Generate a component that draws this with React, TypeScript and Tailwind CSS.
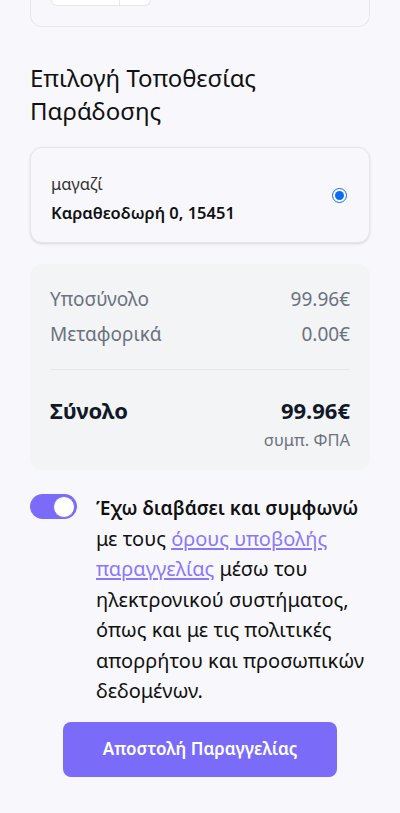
import React from "react";

export default function App() {
  return (
    <div
      className="flex min-h-[813px] w-[400px] flex-col bg-[#f8f8fc] text-[#111111]"
      style={{ fontFamily: '"Noto Sans", "Open Sans", sans-serif' }}
    >
      <div className="px-[30px]">
        {/* top card remnant */}
        <div className="relative h-[27px] rounded-b-xl border border-t-0 border-[#e5e7eb] bg-[#f8f8fc]">
          <div className="absolute left-[20px] top-0 flex h-[6px] w-[100px] rounded-b-md border border-t-0 border-[#e5e7eb] bg-white">
            <div className="w-[68px] border-r border-[#e5e7eb]" />
            <div className="flex-1" />
          </div>
        </div>

        <h2 className="mt-[34px] text-[24px] font-normal leading-[33px] text-[#111]">
          Επιλογή Τοποθεσίας
          <br />
          Παράδοσης
        </h2>

        <div className="mt-[20px] flex h-[96px] items-center justify-between rounded-xl border border-[#e5e7eb] bg-[#f8f8fc] pl-[20px] pr-[22px] shadow-sm">
          <div className="flex flex-col gap-[8px] pt-[5px]">
            <span className="text-[16.5px] leading-[21px] text-[#333]">μαγαζί</span>
            <span className="text-[16.5px] font-semibold leading-[21px] text-[#111]">
              Καραθεοδωρή 0, 15451
            </span>
          </div>
          <div className="flex h-[15px] w-[15px] items-center justify-center rounded-full border-[1.5px] border-[#0b6cf5] bg-white">
            <div className="h-[9px] w-[9px] rounded-full bg-[#0b6cf5]" />
          </div>
        </div>

        <div className="mt-[21px] rounded-xl bg-[#f3f4f6] px-[20px] pb-[17px] pt-[18px]">
          <div className="flex items-center justify-between text-[19px] leading-[35px] text-[#6b7280]">
            <span>Υποσύνολο</span>
            <span>99.96€</span>
          </div>
          <div className="flex items-center justify-between text-[19px] leading-[35px] text-[#6b7280]">
            <span>Μεταφορικά</span>
            <span>0.00€</span>
          </div>
          <div className="mt-[17px] border-t border-[#e5e7eb]" />
          <div className="mt-[25px] flex items-center justify-between text-[22px] font-bold leading-[30px] text-[#111827]">
            <span>Σύνολο</span>
            <span>99.96€</span>
          </div>
          <div className="mt-[2px] text-right text-[16.5px] leading-[26px] text-[#6b7280]">
            συμπ. ΦΠΑ
          </div>
        </div>

        <div className="mt-[23px] flex gap-[19px]">
          <div className="mt-[1px] flex h-[25px] w-[47px] shrink-0 items-center justify-end rounded-full bg-[#7a6cf8] p-[2px]">
            <div className="h-[22px] w-[22px] rounded-full border-[1.5px] border-[#7a6cf8] bg-white" />
          </div>
          <p className="text-[20px] leading-[30.5px] text-[#111]">
            <span className="text-[19px] font-semibold">Έχω διαβάσει και συμφωνώ</span> με
            τους{" "}
            <a className="text-[#8a78f7] underline underline-offset-2" href="#">
              όρους υποβολής παραγγελίας
            </a>{" "}
            μέσω του ηλεκτρονικού συστήματος, όπως και με τις πολιτικές απορρήτου και
            προσωπικών δεδομένων.
          </p>
        </div>

        <div className="mt-[15px] flex justify-center">
          <button className="h-[55px] w-[274px] rounded-lg bg-[#7a6cf9] text-[17px] font-semibold text-white">
            Αποστολή Παραγγελίας
          </button>
        </div>
      </div>
    </div>
  );
}
